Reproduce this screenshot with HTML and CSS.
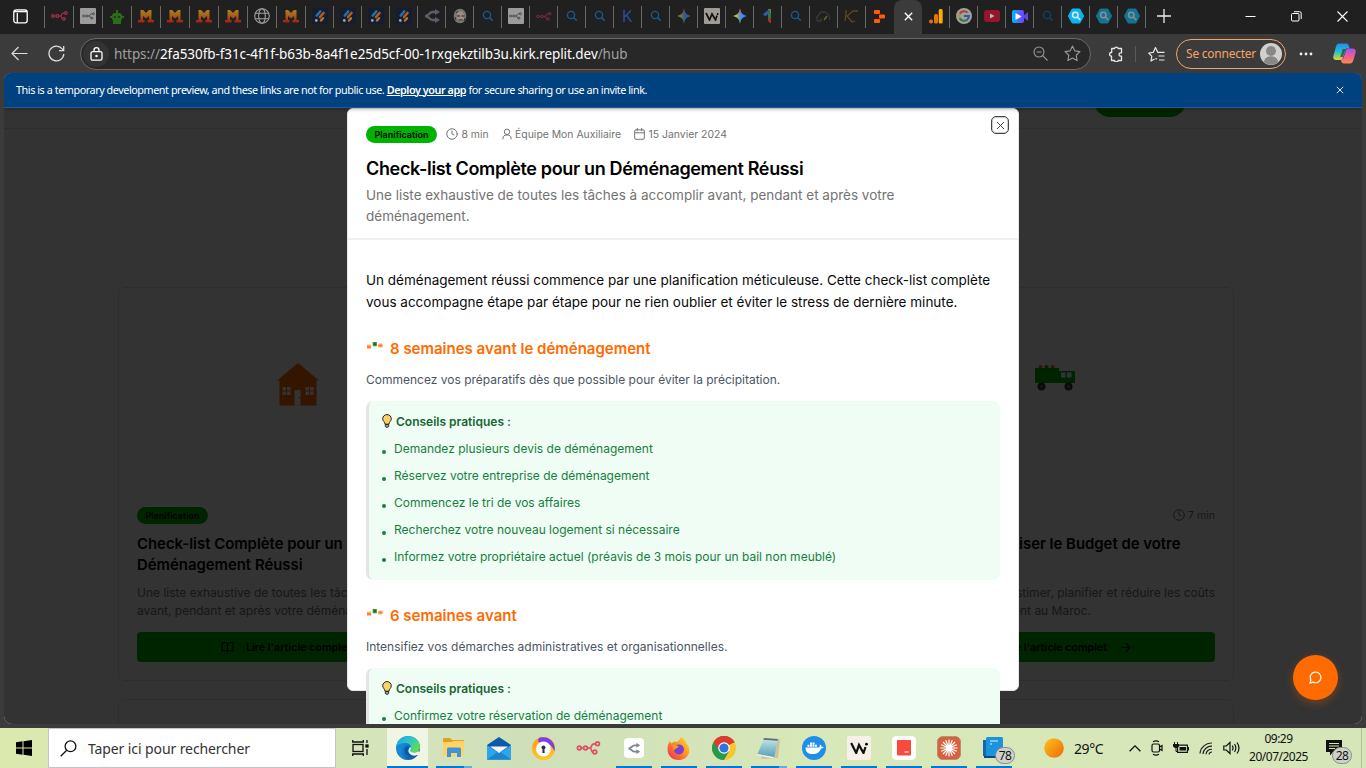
FILE: index.html
```html
<!DOCTYPE html>
<html lang="fr">
<head>
<meta charset="utf-8">
<title>Hub</title>
<link rel="stylesheet" href="styles.css">
</head>
<body>
<svg class="defs" width="0" height="0">
  <defs>
    <linearGradient id="mg" x1="0" y1="0" x2="0" y2="1"><stop offset="0" stop-color="#a8831b"/><stop offset=".5" stop-color="#a85a1b"/><stop offset="1" stop-color="#a01c12"/></linearGradient>
    <linearGradient id="gem" x1="0" y1="0" x2="1" y2="0"><stop offset="0" stop-color="#f5c02c"/><stop offset=".3" stop-color="#b8b84c"/><stop offset=".5" stop-color="#4f90e8"/><stop offset="1" stop-color="#3a7ef0"/></linearGradient>
    <linearGradient id="gemv" x1="0" y1="0" x2="0" y2="1"><stop offset="0" stop-color="#f0403c"/><stop offset=".42" stop-color="#f0403c" stop-opacity="0"/><stop offset=".6" stop-color="#2fae58" stop-opacity="0"/><stop offset="1" stop-color="#2fae58"/></linearGradient>
    <linearGradient id="clip" x1="0" y1="0" x2="1" y2="0"><stop offset="0" stop-color="#00b8ff"/><stop offset="1" stop-color="#7a3cff"/></linearGradient>
    <linearGradient id="cop1" x1="0" y1="0" x2="0" y2="1"><stop offset="0" stop-color="#1f8bf0"/><stop offset=".5" stop-color="#22c3c9"/><stop offset="1" stop-color="#e8d42a"/></linearGradient>
    <linearGradient id="cop2" x1="0" y1="0" x2="0" y2="1"><stop offset="0" stop-color="#a055f0"/><stop offset=".5" stop-color="#ec5a9c"/><stop offset="1" stop-color="#ff8a4a"/></linearGradient>
    <linearGradient id="edge1" x1="0" y1="0" x2="1" y2=".6"><stop offset="0" stop-color="#1b9de2"/><stop offset=".5" stop-color="#2cc3d0"/><stop offset="1" stop-color="#5fdc52"/></linearGradient>
    <linearGradient id="edge2" x1="0" y1="0" x2="1" y2="1"><stop offset="0" stop-color="#1aa0e0"/><stop offset="1" stop-color="#0b4fa0"/></linearGradient>
    <linearGradient id="sun" x1="0" y1="0" x2="1" y2="1"><stop offset="0" stop-color="#ffc21a"/><stop offset="1" stop-color="#ec6a08"/></linearGradient>
    <linearGradient id="fox" x1="1" y1="0" x2="0" y2="1"><stop offset="0" stop-color="#ffe52e"/><stop offset=".5" stop-color="#ff8a22"/><stop offset="1" stop-color="#f0205a"/></linearGradient>
    <linearGradient id="note" x1="0" y1="0" x2="0" y2="1"><stop offset="0" stop-color="#c8e6ea"/><stop offset="1" stop-color="#4f9fb4"/></linearGradient>
    <linearGradient id="avast" x1="0" y1="0" x2="0" y2="1"><stop offset="0" stop-color="#ff9a1a"/><stop offset="1" stop-color="#ffc82a"/></linearGradient>
    <symbol id="n8n" viewBox="0 0 24 14"><g fill="none" stroke="currentColor" stroke-width="1.7"><circle cx="2.8" cy="7" r="1.9"/><circle cx="9" cy="7" r="1.9"/><path d="M4.7 7h2.4M10.9 7H13c3 0 1-4.2 4.5-4.2h1.6M13 7c3 0 1 4 3.500 4"/><circle cx="21" cy="2.800" r="1.900"/><circle cx="18.300" cy="11" r="1.900"/></g></symbol>
    <symbol id="mist" viewBox="0 0 16 14"><path fill="url(#mg)" d="M2.500 1h2.600l2.900 3 2.900-3h2.600v10H16v2.500H9.500V11h1.600V7L8 9.500 5 7v4h1.500v2.500H0V11h2.500z"/></symbol>
    <symbol id="pen" viewBox="0 0 16 16"><rect width="16" height="16" rx="1" fill="#161d33"/><path d="M4.800 7.500 8.200 3.500" stroke="#2372a8" stroke-width="2.600" stroke-linecap="round"/><path d="M8 9 11.500 5" stroke="#b05c24" stroke-width="2.600" stroke-linecap="round"/><path d="M9 12.500l2-2.300" stroke="#b07b24" stroke-width="2.400" stroke-linecap="round"/><circle cx="4.300" cy="12.500" r="1.400" fill="#a0a0a0"/></symbol>
    <symbol id="mag" viewBox="0 0 12 12"><circle cx="5" cy="5" r="3.600" fill="none" stroke="currentColor" stroke-width="1.300"/><path d="M7.600 7.600l3.200 3.200" stroke="currentColor" stroke-width="1.500"/></symbol>
    <symbol id="arr" viewBox="0 0 16 14"><g fill="none" stroke="currentColor" stroke-width="2.400"><path d="M12 3H9C4.500 3 5.500 7 1 7c4.500 0 3.500 4 8 4h3"/></g><path fill="currentColor" d="M11 0l5 3-5 3zM11 8l5 3-5 3z"/></symbol>
    <symbol id="hex" viewBox="0 0 16 16"><path d="M4.200 1h7.600L15.600 8l-3.800 7H4.200L.4 8z" fill="currentColor" stroke="currentColor" stroke-linejoin="round"/><circle cx="7.300" cy="7" r="2.700" fill="none" stroke="#d8eef4" stroke-width="1.500"/><path d="M9.300 9l3 3" stroke="#d8eef4" stroke-width="1.600"/></symbol>
    <symbol id="spark" viewBox="0 0 16 16"><path fill="url(#gem)" d="M8 .5C8.800 5 11 7.200 15.500 8 11 8.800 8.800 11 8 15.500 7.200 11 5 8.800.5 8 5 7.200 7.200 5 8 .5z"/><path fill="url(#gemv)" d="M8 .5C8.800 5 11 7.200 15.500 8 11 8.800 8.800 11 8 15.500 7.200 11 5 8.800.5 8 5 7.200 7.200 5 8 .5z"/></symbol>
    <symbol id="clock" viewBox="0 0 24 24"><g fill="none" stroke="currentColor" stroke-width="2" stroke-linecap="round"><circle cx="12" cy="12" r="10.500"/><path d="M12 6v6l4 2"/></g></symbol>
    <symbol id="garland" viewBox="0 0 16 8"><rect x="0" y="2.500" width="4.200" height="4" rx=".5" fill="#ffb27c"/><rect x="0" y="4.200" width="4" height="2" fill="#ff7a22"/><rect x="5.700" y="0" width="4.200" height="4.200" rx=".5" fill="#2b9a35"/><rect x="7" y="1.400" width="1.600" height="1.500" fill="#46332a"/><rect x="11.300" y="1.500" width="4.200" height="4" rx=".5" fill="#ffb27c"/><rect x="11.400" y="2.700" width="4" height="1.700" fill="#ff7a22"/></symbol>
    <symbol id="bulb" viewBox="0 0 10 14"><path d="M5 .6a4.200 4.200 0 0 0-4.300 4.200C.7 7.200 3 7.800 3 10.200h4c0-2.400 2.300-3 2.300-5.400A4.200 4.200 0 0 0 5 .6z" fill="#fcd265" stroke="#222" stroke-width="1"/><path d="M3.300 10.500h3.400v2L5 13.600 3.300 12.500z" fill="#999" stroke="#222" stroke-width=".9"/></symbol>
  </defs>
</svg>

<div class="tabs">
  <div class="tabs-menu"><svg width="15" height="15" viewBox="0 0 15 15"><rect x=".8" y=".8" width="13.400" height="13" rx="2.300" fill="none" stroke="#fff" stroke-width="1.300"/><path d="M1 2.500h13M4.300 4v10" stroke="#fff" stroke-width="1.300"/></svg></div>
  <div class="tab wide c-n8n"><svg width="17" height="10"><use href="#n8n"/></svg></div>
  <div class="tab wide"><span class="sq"><svg width="13" height="8"><use href="#n8n"/></svg></span></div>
  <div class="tab wide"><svg width="14" height="15" viewBox="0 0 14 15"><path d="M7 1v4" stroke="#2c6a1c" stroke-width="2"/><rect x="2" y="4" width="10" height="8" rx="3" fill="#2c6a1c"/><path d="M0 8h14M4 12h6v2H4z" stroke="#2c6a1c" stroke-width="2"/><circle cx="5" cy="8" r="1" fill="#1b2b18"/><circle cx="9" cy="8" r="1" fill="#1b2b18"/></svg></div>
  <div class="tab wide"><svg width="16" height="14"><use href="#mist"/></svg></div>
  <div class="tab wide"><svg width="16" height="14"><use href="#mist"/></svg></div>
  <div class="tab wide"><svg width="16" height="14"><use href="#mist"/></svg></div>
  <div class="tab wide"><svg width="16" height="14"><use href="#mist"/></svg></div>
  <div class="tab wide"><svg width="16" height="16" viewBox="0 0 16 16" fill="none" stroke="#a0a0a0" stroke-width="1.100"><circle cx="8" cy="8" r="7.300"/><ellipse cx="8" cy="8" rx="3.300" ry="7.300"/><path d="M1.300 5.300h13.400M1.300 10.700h13.400"/></svg></div>
  <div class="tab wide"><svg width="16" height="14"><use href="#mist"/></svg></div>
  <div class="tab"><svg width="16" height="16"><use href="#pen"/></svg></div>
  <div class="tab"><svg width="16" height="16"><use href="#pen"/></svg></div>
  <div class="tab"><svg width="16" height="16"><use href="#pen"/></svg></div>
  <div class="tab"><svg width="16" height="16"><use href="#pen"/></svg></div>
  <div class="tab c-arr"><svg width="16" height="14"><use href="#arr"/></svg></div>
  <div class="tab"><svg width="14" height="16" viewBox="0 0 14 16"><ellipse cx="7" cy="8" rx="6.300" ry="7.300" fill="#777"/><ellipse cx="7.500" cy="8.500" rx="3.800" ry="5" fill="#a08c82"/><path d="M4 8h3M8.500 8h3M5.500 12h4" stroke="#222" fill="none"/><path d="M3 5l2-2M2 9l1 3M11 13l1-3" stroke="#333"/></svg></div>
  <div class="tab c-mag"><svg width="12" height="12"><use href="#mag"/></svg></div>
  <div class="tab"><span class="sq"><svg width="13" height="8"><use href="#n8n"/></svg></span></div>
  <div class="tab c-n8n dim"><svg width="16" height="9"><use href="#n8n"/></svg></div>
  <div class="tab c-mag"><svg width="12" height="12"><use href="#mag"/></svg></div>
  <div class="tab c-mag"><svg width="12" height="12"><use href="#mag"/></svg></div>
  <div class="tab"><svg width="9" height="12" viewBox="0 0 9 12"><path d="M1 0v12M8 .5 1.500 7M3.500 5 8.300 12" stroke="#2b4b9b" stroke-width="1.500" fill="none"/></svg></div>
  <div class="tab c-mag"><svg width="12" height="12"><use href="#mag"/></svg></div>
  <div class="tab half"><svg width="16" height="16"><use href="#spark"/></svg></div>
  <div class="tab"><span class="sq cream"><svg width="14" height="9" viewBox="0 0 14 9"><path d="M1 1l3.500 7L7 2l3.500 6L12 3.500" fill="none" stroke="#111" stroke-width="1.700"/><circle cx="12.700" cy="2" r=".9"/></svg></span></div>
  <div class="tab"><svg width="16" height="16"><use href="#spark"/></svg></div>
  <div class="tab"><svg width="9" height="15" viewBox="0 0 9 15"><path d="M5 0h3v5H5z" fill="#8a7c1d"/><path d="M6.500 0 0 5l2 2.500L7 4z" fill="#2f5aa8"/><path d="M5 4h3v6H5z" fill="#2c7a42"/><path d="M5 9h3v5H7L5 12z" fill="#97382f"/></svg></div>
  <div class="tab c-mag"><svg width="12" height="12"><use href="#mag"/></svg></div>
  <div class="tab"><svg width="15" height="12" viewBox="0 0 15 12" fill="none" stroke="#353c30" stroke-width="1.300"><path d="M1 11V7l4-5h4l4 3 1 5M1 11h4V8"/><path d="M8 10l3-4" stroke="#766b1d"/></svg></div>
  <div class="tab"><svg width="15" height="14" viewBox="0 0 15 14" fill="none" stroke="#5b481c" stroke-width="1.300"><path d="M2 1v3L1 12M14 2H9L3 7l5 6 3-1"/></svg></div>
  <div class="tab last"><svg width="11" height="13" viewBox="0 0 11 13" fill="#ff5a0a"><rect width="6" height="4" rx=".8"/><rect x="5" y="4.500" width="6" height="4" rx=".8"/><rect y="9" width="6" height="4" rx=".8"/></svg></div>
  <div class="tab active"><svg width="9" height="9" viewBox="0 0 9 9"><path d="M.8.8l7.400 7.400M8.200.8.8 8.200" stroke="#fff" stroke-width="1.300"/></svg></div>
  <div class="tab"><svg width="14" height="15" viewBox="0 0 14 15"><rect x="9.700" y="0" width="4" height="14.500" rx="1.500" fill="#f9ab00"/><rect x="5" y="5" width="4" height="9.500" rx="1.500" fill="#e8710a"/><circle cx="2" cy="12.500" r="2" fill="#e8710a"/></svg></div>
  <div class="tab"><svg width="16" height="16" viewBox="0 0 16 16"><circle cx="8" cy="8" r="8" fill="#a0a0a0"/><g fill="none" stroke-width="2"><path d="M11.500 4.600A4.900 4.900 0 0 0 3.700 5.700" stroke="#b0402f"/><path d="M3.700 5.700a4.900 4.900 0 0 0 0 4.600" stroke="#b8912a"/><path d="M3.700 10.300a4.900 4.900 0 0 0 7.400 1.400" stroke="#2c7a42"/><path d="M11.100 11.700A4.900 4.900 0 0 0 12.900 8H8" stroke="#33599e"/></g></svg></div>
  <div class="tab"><svg width="16" height="12" viewBox="0 0 16 12"><rect width="16" height="12" rx="3" fill="#96152d"/><path d="M6 3.500v5L10.500 6z" fill="#bbb"/></svg></div>
  <div class="tab"><svg width="16" height="13" viewBox="0 0 16 13"><rect width="12" height="13" rx="2" fill="url(#clip)"/><path d="M11 6l5-4v9l-5-4z" fill="#6048d8"/><path d="M3.500 3v7l6-3.500z" fill="#fff"/></svg></div>
  <div class="tab c-mag dark"><svg width="12" height="12"><use href="#mag"/></svg></div>
  <div class="tab c-hex"><svg width="16" height="16"><use href="#hex"/></svg></div>
  <div class="tab c-hex half"><svg width="16" height="16"><use href="#hex"/></svg></div>
  <div class="tab c-hex half"><svg width="16" height="16"><use href="#hex"/></svg></div>
  <div class="newtab"><svg width="14" height="14" viewBox="0 0 14 14"><path d="M7 0v14M0 7h14" stroke="#eee" stroke-width="1.300"/></svg></div>
  <div class="winbtns">
    <svg width="11" height="11" viewBox="0 0 11 11"><path d="M.5 5.500h10" stroke="#fff"/></svg>
    <svg width="11" height="11" viewBox="0 0 11 11" fill="none" stroke="#fff"><rect x=".5" y="2.500" width="7.500" height="7.500" rx="1"/><path d="M3 .7h5.500A1.600 1.600 0 0 1 10.200 2.300V8"/></svg>
    <svg width="11" height="11" viewBox="0 0 11 11"><path d="M.5.5l10 10M10.500.5l-10 10" stroke="#fff" stroke-width="1.100"/></svg>
  </div>
</div>

<div class="toolbar">
  <svg class="back" width="17" height="15" viewBox="0 0 17 15" fill="none" stroke="#ddd" stroke-width="1.200"><path d="M16.500 7.500H1M7.500 1 1 7.500 7.500 14"/></svg>
  <svg class="reload" width="17" height="17" viewBox="0 0 17 17" fill="none" stroke="#ddd" stroke-width="1.300"><path d="M15.800 9a7.400 7.400 0 1 1-1.600-5.100L15.500 5.500M15.700 1v4.700H11"/></svg>
  <div class="urlbar">
    <span class="lock"><svg width="13" height="14" viewBox="0 0 13 14" fill="none" stroke="#fff" stroke-width="1.300"><rect x="1" y="4.700" width="11" height="8.500" rx="1.600"/><path d="M4 4.700V3.200a2.500 2.500 0 0 1 5 0v1.500"/><circle cx="6.500" cy="9" r=".6" fill="#fff"/></svg></span>
    <span class="url"><i>https://</i>2fa530fb-f31c-4f1f-b63b-8a4f1e25d5cf-00-1rxgekztilb3u.kirk.replit.dev<i>/hub</i></span>
    <svg class="zoomout" width="15" height="15" viewBox="0 0 15 15" fill="none" stroke="#999" stroke-width="1.100"><circle cx="6" cy="6" r="5"/><path d="M9.700 9.700l4.800 4.800M3.500 6h5"/></svg>
    <svg width="17" height="17" viewBox="0 0 24 24" fill="none" stroke="#999" stroke-width="1.600" stroke-linejoin="round"><path d="M12 1.500l3.200 6.800 7.300 1-5.300 5.200 1.300 7.500L12 18.400 5.500 22l1.300-7.500L1.500 9.300l7.300-1z"/></svg>
  </div>
  <svg class="puzzle" width="15" height="16" viewBox="0 0 15 16" fill="none" stroke="#e8e8e8" stroke-width="1.300" stroke-linejoin="round"><path d="M4 2.500h2.500a1.900 1.900 0 0 1 3.700 0h3.300v4.300h-.8a1.700 1.700 0 0 0 0 3.400h.8v4.300h-3.300a1.900 1.900 0 0 1-3.700 0H3.500v-4.300H3a1.900 1.900 0 0 1 0-3.700h.7V2.500z"/></svg>
  <span class="vsep"></span>
  <svg class="favs" width="17" height="16" viewBox="0 0 17 16" fill="none" stroke="#e8e8e8" stroke-width="1.200" stroke-linejoin="round"><path d="M6.500 13 3 15l.8-4.700L.8 7l4.500-.7L7.500 1.500 9.700 6.300H16.500M10.500 10H16.500M11 14h5.500M7.500 12.400l1.500.8"/></svg>
  <span class="signin">Se connecter<span class="avatar"><svg width="22" height="22" viewBox="0 0 22 22"><circle cx="11" cy="11" r="11" fill="#d2d0ce"/><circle cx="11" cy="8" r="5" fill="#8a8886"/><path d="M4 19.300c0-8 14-8 14 0a11 11 0 0 1-14 0z" fill="#8a8886"/></svg></span></span>
  <svg class="more" width="14" height="4" viewBox="0 0 14 4" fill="#eee"><circle cx="2" cy="2" r="1.400"/><circle cx="7" cy="2" r="1.400"/><circle cx="12" cy="2" r="1.400"/></svg>
  <svg class="copilot" width="23" height="21" viewBox="0 0 23 21"><path d="M6 .5h7c2 0 2.500 1 3 3l.6 2H13l-3 9c-.6 2-1.500 2.500-3 2.500H3C.5 17-.3 15.300.5 12.500L3 3.500C3.600 1.500 4.400.5 6 .5z" fill="url(#cop1)"/><path d="M17 5.500h2.500c2.800 0 3.700 1.700 3 4.500l-2.200 7.500c-.6 2-1.600 3-3.300 3H11c-2 0-2.500-1-3-3L7.500 16H10l3-8.500c.6-1.500 1.500-2 4-2z" fill="url(#cop2)"/><path d="M9.800 6h2.700L9.800 14H7.200z" fill="#3b3b3b" opacity=".75"/></svg>
</div>

<div class="frame">
<div class="viewport">
  <main class="page">
    <header class="site"><svg width="20" height="12" viewBox="0 0 20 12"><circle cx="5" cy="6" r="4" fill="#ff6b00"/><circle cx="15" cy="6" r="4" fill="#ff6b00"/></svg><span class="cta"></span></header>
    <section class="grid">
      <article class="card">
        <div class="art"><svg class="house" width="42" height="43" viewBox="0 0 42 43"><path fill="#ff6b00" d="M21 0l21 17.500h-2.500V42.500h-37V17.500H0z"/><g fill="#fff"><rect x="17.500" y="27" width="6" height="15.500"/><path d="M5.500 24h8v8h-8zM28.500 24h8v8h-8z"/></g><path d="M5.500 28h8M9.500 24v8M28.500 28h8M32.500 24v8" stroke="#ff6b00"/><circle cx="22" cy="34.500" r=".8" fill="#ff6b00"/></svg></div>
        <div class="row"><span class="badge">Planification</span></div>
        <h3>Check-list Complète pour un Déménagement Réussi</h3>
        <p>Une liste exhaustive de toutes les tâches à accomplir avant, pendant et après votre déménagement.</p>
        <div class="btn"><svg width="13" height="13" viewBox="0 0 24 24" fill="none" stroke="#000" stroke-width="2"><path d="M12 6v15M12 6c-1-2-3-3-5-3H2v15h7c2 0 3 1 3 3 0-2 1-3 3-3h7V3h-5c-2 0-4 1-5 3z"/></svg><span>Lire l'article complet</span><svg class="go" width="11" height="11" viewBox="0 0 11 11" fill="none" stroke="#000" stroke-width="1.200"><path d="M1 5.500h9M5.800 1.200 10 5.500 5.800 9.800"/></svg></div>
      </article>
      <article class="card"></article>
      <article class="card">
        <div class="art"><svg class="truck" width="40" height="27" viewBox="0 0 40 27"><g fill="#ff6b00"><circle cx="5.500" cy="2" r="2"/><circle cx="17.500" cy="2" r="2"/></g><circle cx="11.500" cy="2" r="2" fill="#00b300"/><path fill="#00b300" d="M1 3h23v3h15q1 0 1 1v11H0V4q0-1 1-1z"/><path d="M26 7.500h4.500v5H26zM32 7.500h4.500v5H32z" fill="#fff"/><g fill="#333"><circle cx="6.500" cy="21.500" r="4"/><circle cx="33.500" cy="21.500" r="4"/></g><circle cx="6.500" cy="21.500" r="1.800" fill="#666"/><circle cx="33.500" cy="21.500" r="1.800" fill="#666"/></svg></div>
        <div class="row end"><svg width="12" height="12"><use href="#clock"/></svg><span class="time">7 min</span></div>
        <h3><span class="t3">Comment Optimiser le Budget de votre</span><br>Déménagement</h3>
        <p class="p3"><span>Nos conseils pour estimer, planifier et réduire les coûts</span><span class="l2">d'un déménagement au Maroc.</span></p>
        <div class="btn"><svg width="13" height="13" viewBox="0 0 24 24" fill="none" stroke="#000" stroke-width="2"><path d="M12 6v15M2 3v15h20V3z"/></svg><span>Lire l'article complet</span><svg class="go" width="11" height="11" viewBox="0 0 11 11" fill="none" stroke="#000" stroke-width="1.200"><path d="M1 5.500h9M5.800 1.200 10 5.500 5.800 9.800"/></svg></div>
      </article>
      <article class="card"></article><article class="card"></article><article class="card"></article>
    </section>
  </main>
  <div class="overlay"></div>

  <div class="modal">
    <span class="close"><svg width="9" height="9" viewBox="0 0 9 9"><path d="M1 1l7 7M8 1 1 8" stroke="#444" stroke-width="1"/></svg></span>
    <div class="mhead">
      <div class="meta">
        <span class="badge">Planification</span>
        <svg class="m1" width="12" height="12"><use href="#clock"/></svg><span class="tx">8 min</span>
        <svg class="m2" width="10" height="12" viewBox="0 0 10 12" fill="none" stroke="currentColor"><circle cx="5" cy="3.800" r="2.700"/><path d="M1 11.300V10c0-2 1.500-3 4-3s4 1 4 3v1.300"/></svg><span class="tx">Équipe Mon Auxiliaire</span>
        <svg class="m3" width="11" height="12" viewBox="0 0 11 12" fill="none" stroke="currentColor"><rect x=".7" y="1.800" width="9.600" height="9.500" rx="1.200"/><path d="M.7 4.800h9.600M3.300 0v3M7.700 0v3"/></svg><span class="tx">15 Janvier 2024</span>
      </div>
      <h2>Check-list Complète pour un Déménagement Réussi</h2>
      <p class="desc">Une liste exhaustive de toutes les tâches à accomplir avant, pendant et après votre<br>déménagement.</p>
    </div>
    <div class="mbody">
      <p class="lead">Un déménagement réussi commence par une planification méticuleuse. Cette check-list complète<br>vous accompagne étape par étape pour ne rien oublier et éviter le stress de dernière minute.</p>
      <section class="step">
        <h3><svg width="16" height="8"><use href="#garland"/></svg><span>8 semaines avant le déménagement</span></h3>
        <p>Commencez vos préparatifs dès que possible pour éviter la précipitation.</p>
        <div class="tips">
          <h4><svg width="10" height="14"><use href="#bulb"/></svg>Conseils pratiques :</h4>
          <ul><li>Demandez plusieurs devis de déménagement</li><li>Réservez votre entreprise de déménagement</li><li>Commencez le tri de vos affaires</li><li>Recherchez votre nouveau logement si nécessaire</li><li>Informez votre propriétaire actuel (préavis de 3 mois pour un bail non meublé)</li></ul>
        </div>
      </section>
      <section class="step">
        <h3><svg width="16" height="8"><use href="#garland"/></svg><span>6 semaines avant</span></h3>
        <p>Intensifiez vos démarches administratives et organisationnelles.</p>
        <div class="tips">
          <h4><svg width="10" height="14"><use href="#bulb"/></svg>Conseils pratiques :</h4>
          <ul><li>Confirmez votre réservation de déménagement</li></ul>
        </div>
      </section>
    </div>
  </div>

  <div class="banner"><span>This is a temporary development preview, and these links are not for public use. <b>Deploy your app</b> for secure sharing or use an invite link.</span><svg width="8" height="8" viewBox="0 0 8 8"><path d="M.8.8l6.400 6.400M7.200.8.8 7.200" stroke="#dde6f2"/></svg></div>
  <div class="fab"><svg width="13" height="13" viewBox="0 0 24 24" fill="none" stroke="#fff" stroke-width="2.200" stroke-linejoin="round"><path d="M7.500 20.500A9.800 9.800 0 1 0 3.500 16.500L1.500 22.500z"/></svg></div>
</div>
</div>

<div class="taskbar">
  <div class="start"><svg width="16" height="16" viewBox="0 0 16 16"><path d="M0 2.300 6.500 1.300V7.500H0zM7.500 1.200 16 0v7.500H7.500zM0 8.500h6.500v6.200L0 13.700zM7.500 8.500H16V16l-8.500-1.200z"/></svg></div>
  <div class="search"><svg width="17" height="17" viewBox="0 0 17 17" fill="none" stroke="#111" stroke-width="1.300"><circle cx="10.500" cy="6.300" r="5.400"/><path d="M6.700 10.200.7 16.300"/></svg><span>Taper ici pour rechercher</span></div>
  <div class="app tv"><svg width="17" height="16" viewBox="0 0 17 16" fill="none" stroke="#111" stroke-width="1.300"><rect x="1" y="4.500" width="10" height="7"/><path d="M.7 0v2h10.600V0M.7 16v-2h10.600v2M15 0v3M15 9v6"/><rect x="14" y="5" width="2" height="2" fill="#111"/></svg></div>
  <div class="app edge"><svg width="24" height="24" viewBox="0 0 24 24"><circle cx="12" cy="12" r="12" fill="url(#edge2)"/><path d="M.3 10.500C1.500 4 6.500 0 12 0c7 0 12 5 12 10.500 0 4-3 6-6 6-2.500 0-3.800-1-3.800-2 0-.8 1-1.300 1-3C15.200 9 12.500 7 9 7 5 7 1.500 8.500.3 10.500z" fill="url(#edge1)"/><path d="M9.500 11c-1 1-1.300 2.500-1 4 .6 3.500 4 6 7.500 6 2.500 0 4.500-1 6.300-2.500-1.500.5-7 1-9.300-2-1-1.500-1-3 .5-5 -1-1.500-3-1.500-4-.5z" fill="#0b57a8"/><path d="M14.200 14.500c0 1 1.300 2 3.800 2 1.600 0 3.100-.5 4.200-1.500l1.800 2-1.700 1.800c-3.500 1.700-8.300.7-9.500-2.300-.7-1.700-.3-3.500.9-5 .8-.9 1.500.2 1.500 0 0 1.700-1 2.200-1 3z" fill="#eff4ec"/><path d="M7.500 9C4 12 4.500 20.500 12 24 7 23.500 2.500 20.500 1 15c-.5-4 3-6 6.500-6z" fill="#1787d8"/></svg></div>
  <div class="app on two"><svg width="24" height="20" viewBox="0 0 24 20"><path d="M1 1q0-1 1-1h6l2 2h11q1 0 1 1v4H1z" fill="#e0a020"/><path d="M1 4h9l1-1h10q1 0 1 1v14H1z" fill="#ffd464"/><path d="M5 18v-7q0-1.500 1.500-1.500h11Q19 9.500 19 11v8h-4v-4H9v4H5z" fill="#3f93dc"/></svg></div>
  <div class="app"><svg width="24" height="23" viewBox="0 0 24 23"><path d="M12 0l12 8v14.500H0V8z" fill="#0d5aa8"/><path d="M0 8l12 8.500L24 8v14.500H0z" fill="#2ea7e8"/><path d="M0 22.500 12 14l12 8.500z" fill="#1887d0"/><path d="M3 9.500h18l-9 6.500z" fill="#f4f4f4"/></svg></div>
  <div class="app"><svg width="23" height="23" viewBox="0 0 23 23"><circle cx="11.500" cy="11.500" r="11.500" fill="url(#avast)"/><path d="M8 .6A11.500 11.500 0 0 1 22.500 14C20 8 15 4.500 8 6 5 4 6 2 8 .6z" fill="#7a3fe8"/><circle cx="11.500" cy="12" r="7.500" fill="#fff"/><circle cx="11.500" cy="10.500" r="2" fill="#26324a"/><path d="M10.700 11h1.600l.4 5h-2.400z" fill="#26324a"/></svg></div>
  <div class="app c-pink"><svg width="25" height="14"><use href="#n8n"/></svg></div>
  <div class="app on"><span class="tile"><svg width="14" height="11"><use href="#arr"/></svg></span></div>
  <div class="app on"><svg width="23" height="23" viewBox="0 0 23 23"><path d="M14 0c3 2 4.500 3.500 5 6 2.500 1.500 4 6.500 3 10-1.500 4.500-5.500 7-10.500 7C5 23 .5 18.500.5 12c0-3 .8-5.500 2.500-8 .3 1.300.7 2 1.500 2.500C6 5 8 4.500 9.500 5 11 4 13 3 14 0z" fill="url(#fox)"/><circle cx="12" cy="12.500" r="5" fill="#7a3fd8"/><path d="M5 8c3-1 5 .5 7 1.500-1.500 2-4 1.500-4.500 3.500C5.500 12 5 10 5 8z" fill="#ff9a2a"/></svg></div>
  <div class="app on"><svg width="24" height="24" viewBox="0 0 24 24"><circle cx="12" cy="12" r="12" fill="#f7c52c"/><path d="M12 12 1.600 6A12 12 0 0 1 22.400 6z" fill="#dc3b2e"/><path d="M1.600 6A12 12 0 0 0 12 24l5.200-9-5.200 2.500z" fill="#249a4c"/><path d="M12 6.500h10.700L22.400 6A12 12 0 0 0 1.600 6l5.200 8z" fill="#dc3b2e"/><circle cx="12" cy="12" r="5.800" fill="#fff"/><circle cx="12" cy="12" r="4.600" fill="#2b74e8"/></svg></div>
  <div class="app on two"><svg width="24" height="23" viewBox="0 0 24 23"><path d="M8 1.500 23 2.500 21 21 4 22z" fill="#cfc39a"/><path d="M7 1l14 1-4 19L.5 17z" fill="url(#note)"/><path d="M7 1l14 1-.4 1.800L6.300 2.700z" fill="#5d6e74"/><path d="M.5 17 17 20l-.5 1.500L1 18.500z" fill="#e8eef0"/></svg></div>
  <div class="app on"><svg width="24" height="24" viewBox="0 0 24 24"><circle cx="12" cy="12" r="12" fill="#1d8feb"/><path d="M3.500 11.500h14c.2-1.500 0-2.200.8-3 .8.600 1.200 1.300 1.200 2.300.8-.2 1.700 0 2.200.3-.6 1.300-1.700 1.500-2.700 1.500-1.500 4-4 5.500-8 5.500-5 0-7.500-2-7.500-6.600zM5.500 8.800h2v2h-2zM8 8.800h2v2H8zM10.500 8.800h2v2h-2zM13 8.800h2v2h-2zM8 6.400h2v2H8zM10.500 6.400h2v2h-2z" fill="#fff"/></svg></div>
  <div class="app on"><span class="tile w"><svg width="18" height="12" viewBox="0 0 18 12"><path d="M1.200 1l5 10L9 3l4.500 8L15.500 5" fill="none" stroke="#111" stroke-width="2.200"/><circle cx="16.500" cy="2.200" r="1.400"/></svg></span></div>
  <div class="app on"><svg width="24" height="24" viewBox="0 0 24 24"><rect width="24" height="24" rx="4.500" fill="#fff"/><rect x="5" y="4" width="14" height="15.500" rx="1" fill="#fb4a3c"/><path d="M12.500 16h4" stroke="#fff" stroke-width="1.200"/></svg></div>
  <div class="app on"><svg width="24" height="24" viewBox="0 0 24 24"><rect x=".4" y=".4" width="23.200" height="23.200" rx="5.500" fill="#d9603f" stroke="#a98a78" stroke-width=".8"/><path d="M12 3.500v17M3.500 12h17M6 6l12 12M18 6 6 18M8.700 4.200l6.600 15.600M15.300 4.200 8.700 19.800M4.200 8.700l15.600 6.600M4.200 15.300l15.600-6.600" stroke="#fff" stroke-width="1.200"/></svg></div>
  <div class="app on"><svg width="24" height="24" viewBox="0 0 24 24"><path d="M1 4h12v16H1z" fill="#1468a8"/><rect x="4" y="1" width="17" height="19" rx="1.500" fill="#1b93e0"/><path d="M8 5h8M8 8h2" stroke="#9bd8ff" stroke-width="1.500"/><path d="M2 20h14v2H2z" fill="#0b4a80"/></svg><span class="count">78</span></div>
  <div class="weather"><svg width="20" height="20" viewBox="0 0 20 20"><circle cx="10" cy="10" r="9.800" fill="url(#sun)"/></svg><span>29°C</span></div>
  <div class="tray">
    <svg width="12" height="7" viewBox="0 0 12 7" fill="none" stroke="#111" stroke-width="1.300"><path d="M.6 6.300 6 .9l5.400 5.400"/></svg>
    <svg width="12" height="16" viewBox="0 0 12 16" fill="none" stroke="#111" stroke-width="1.200"><rect x="1" y="4" width="7.500" height="8" rx="1.500"/><path d="M8.500 7 11 5.500v5L8.500 9M2 1.700Q5 0 8 1.700M2 14.300Q5 16 8 14.300"/></svg>
    <svg width="16" height="12" viewBox="0 0 16 12"><path d="M4.600 3.100h9.800v7.300H4.600z" fill="none" stroke="#111" stroke-width="1.100"/><path d="M6.500 5h6.500v3.600H6.500zM15 5h1v3.500h-1zM1 0h1v2H1zM4 0h1v2H4z" fill="#111"/><path d="M0 2h6v2.500q-3 3-6 0z" fill="#111"/><path d="M3 5.500v4h2" stroke="#111" fill="none"/></svg>
    <svg width="14" height="13" viewBox="0 0 14 13" fill="none" stroke="#222" stroke-width="1.200"><path d="M1 11.500A11.500 11.500 0 0 1 13 1M4 12A8.500 8.500 0 0 1 13 4.200M7 12.300a5.500 5.500 0 0 1 6-5M10 12.300a3 3 0 0 1 3-2.300"/></svg>
    <svg width="17" height="14" viewBox="0 0 17 14" fill="none" stroke="#111" stroke-width="1.200"><path d="M.8 5h2.500L7 1.500v11L3.300 9H.8zM9.300 4.700q1.500 2.300 0 4.600M11.500 3q2.700 4 0 8M14 1.500q4 5.500 0 11"/></svg>
  </div>
  <div class="clock"><span>09:29</span><span>20/07/2025</span></div>
  <div class="notif"><svg width="16" height="16" viewBox="0 0 16 16"><path d="M0 0h16v12H7l-3 3.500V12H0z" fill="#111"/><path d="M3 3.500h10M3 6h10M3 8.500h6" stroke="#d6e4b8" stroke-width="1.100"/></svg><span class="count">28</span></div>
</div>
</body>
</html>
```
FILE: styles.css
```css
* { box-sizing: border-box; margin: 0; padding: 0; }
body { width: 1366px; height: 768px; overflow: hidden; display: flex; flex-direction: column; background: #3b3b3b; font-family: "Noto Sans", "Open Sans", sans-serif; }
svg { display: block; flex: none; }
.defs { position: absolute; }

/* Tab strip */
.tabs { display: flex; height: 34px; background: #202020; flex: none; }
.tabs-menu { width: 45px; padding: 9px 0 0 13px; border-right: 1px solid #555; border-image: linear-gradient(#0000 7px, #696969 7px, #696969 27px, #0000 27px) 1; }
.tab { width: 28px; display: flex; align-items: center; justify-content: center; padding-bottom: 2px; border-right: 1px solid; border-image: linear-gradient(#0000 7px, #696969 7px, #696969 27px, #0000 27px) 1; }
.tab.wide { width: 29px; }
.tab.last, .tab.active { border-image: none; border-color: transparent; }
.tab.active { background: #3b3b3b; border: 0; border-radius: 8px 8px 0 0; }
.half > * { opacity: .55; }
.sq { width: 16px; height: 16px; border-radius: 1px; background: #9c9c9c; color: #454550; display: flex; align-items: center; justify-content: center; }
.sq.cream { background: #a09c95; }
.c-n8n { color: #a8304c; }
.c-n8n.dim { color: #742b3c; }
.c-arr { color: #5a606a; }
.c-mag { color: #185a8c; }
.c-mag.dark { color: #163f68; }
.c-hex { color: #0fb5f2; }
.newtab { padding: 9px 0 0 11px; flex: 1; }
.winbtns { display: flex; gap: 35px; padding: 11px 18px 0 0; }

/* Toolbar */
.toolbar { height: 39px; flex: none; display: flex; align-items: center; padding: 2px 10px 2px 11px; }
.reload { margin-left: 20px; }
.urlbar { margin-left: 15px; width: 1012px; height: 32px; border: 1px solid #6a6a6a; border-radius: 16px; background: #282828; display: flex; align-items: center; padding: 0 9px 0 2px; }
.lock { width: 26px; height: 26px; border-radius: 13px; background: #333; display: flex; align-items: center; justify-content: center; }
.url { margin-left: 5px; color: #fff; font-size: 13.5px; letter-spacing: -.07px; flex: 1; white-space: nowrap; }
.url i { font-style: normal; color: #a0a0a0; }
.zoomout { margin-right: 16px; }
.puzzle { margin-left: 17px; }
.vsep { width: 1px; height: 16px; background: #5a5a5a; margin-left: 12px; }
.favs { margin-left: 12px; }
.signin { margin-left: 11px; width: 110px; height: 30px; border: 1px solid #f5a469; border-radius: 15px; color: #f5a469; font-size: 12px; display: flex; align-items: center; justify-content: space-between; padding: 0 3px 0 9px; letter-spacing: -.25px; white-space: nowrap; }
.more { margin-left: 13px; }
.copilot { margin-left: 20px; }

/* Web page */
.frame { height: 655px; flex: none; padding: 0 4px 4px; }
.viewport { position: relative; height: 651px; overflow: hidden; border-radius: 8px; background: #fff; font-family: Inter, sans-serif; }
.site { height: 56px; border-bottom: 1px solid #e5e5e5; display: flex; justify-content: space-between; align-items: flex-end; padding: 0 176px 11px 116px; }
.site svg { margin-bottom: 7px; }
.cta { width: 92px; height: 32px; border-radius: 16px; background: #00b300; }
.grid { display: grid; grid-template-columns: repeat(3, 360px); gap: 18px; margin: 158px 0 0 114px; grid-auto-rows: 394px; }
.card { border: 1px solid #e2e2e2; border-radius: 7px; padding: 0 18px; }
.art { height: 217px; display: flex; justify-content: center; padding-top: 75px; }
.truck { margin: 2px 0 0 2px; }
.row { display: flex; align-items: center; height: 20px; color: #737373; }
.row.end { justify-content: flex-end; }
.time { font-size: 10.600px; margin-left: 3px; }
.badge { display: inline-flex; align-items: center; justify-content: center; width: 71px; height: 17px; border-radius: 9px; background: #00b300; color: #000; font-size: 9px; font-weight: 600; flex: none; }
.card h3 { margin-top: 9px; font-size: 14.900px; line-height: 21px; font-weight: 600; height: 42px; white-space: nowrap; }
.card:first-child h3 { white-space: normal; width: 250px; }
.t3 { padding-left: 9px; }
.card p { margin-top: 8px; font-size: 12px; line-height: 18px; color: #737373; height: 36px; }
.btn { margin-top: 12px; height: 30px; border-radius: 4px; background: #00b300; display: flex; align-items: center; justify-content: center; gap: 12px; font-size: 10.700px; font-weight: 600; white-space: nowrap; }
.go { margin-left: 1px; }
.card .p3 { white-space: nowrap; display: flex; flex-direction: column; align-items: flex-end; }
.l2 { margin-right: 124px; }
.overlay { position: absolute; inset: 0; background: rgba(0,0,0,.8); }

/* Banner */
.banner { position: absolute; left: 0; right: 0; top: 0; height: 35px; background: #00417f; border-bottom: 1px solid #1f5a94; box-shadow: 0 1px 4px rgba(0,0,0,.3); display: flex; align-items: center; justify-content: space-between; padding: 0 18px 0 12px; color: #fff; font: 10.800px "Noto Sans", sans-serif; letter-spacing: -.44px; }
.banner span { padding-bottom: 2px; }
.banner b { text-decoration: underline; font-weight: 600; }

/* Dialog */
.modal { position: absolute; left: 343px; top: 35px; width: 672px; height: 583px; background: #fff; border-radius: 6px; border: 1px solid #e5e5e5; }
.close { position: absolute; right: 9px; top: 7px; width: 18px; height: 18px; border: 1.500px solid #444; box-shadow: inset 0 0 0 1px #ccc; border-radius: 5px; display: flex; align-items: center; justify-content: center; }
.mhead { height: 131px; border-bottom: 2px solid #f0f0f0; padding: 16px 18px 0; }
.meta { display: flex; align-items: center; height: 18px; color: #737373; font-size: 10.400px; white-space: nowrap; }
.m1 { margin-left: 9px; }
.tx { margin-left: 3.500px; }
.m2, .m3 { margin-left: 13px; }
.mhead h2 { margin-top: 15px; font-size: 18px; line-height: 22px; font-weight: 600; letter-spacing: -.34px; white-space: nowrap; }
.desc { margin-top: 5px; font-size: 13.500px; line-height: 21px; color: #737373; white-space: nowrap; }
.mbody { padding: 29px 18px 0; }
.lead { font-size: 13.500px; line-height: 22px; color: #0a0a0a; white-space: nowrap; }
.step { height: 267px; padding-top: 24px; }
.step h3 { display: flex; align-items: center; gap: 7px; height: 22px; font-size: 15px; font-weight: 600; color: #ff6b00; padding-left: 1px; }
.step h3 svg { margin-bottom: 5px; }
.step > p { margin-top: 12px; font-size: 12px; line-height: 18px; color: #4b5563; }
.tips { margin-top: 12px; height: 179px; background: #f0fdf4; border-left: 3px solid #e5e5e5; border-radius: 7px; padding: 11px 0 0 13px; }
.tips h4 { display: flex; align-items: center; gap: 4px; height: 18px; font-size: 12px; font-weight: 600; color: #166534; }
.tips ul { list-style: none; margin-top: 5px; font-size: 12px; color: #15803d; }
.tips li { height: 27px; display: flex; align-items: center; white-space: nowrap; }
.tips li::before { content: ""; width: 4px; height: 4px; border-radius: 2px; background: #15803d; margin: 7px 8px 0 0; }
.fab { position: absolute; left: 1289px; top: 582px; width: 45px; height: 45px; border-radius: 50%; background: #ff6b00; display: flex; align-items: center; justify-content: center; box-shadow: 0 3px 10px rgba(255,107,0,.3); }

/* Taskbar */
.taskbar { height: 40px; flex: none; display: flex; background: linear-gradient(90deg, #dbe8ae, #d5e4bb 30%, #cfdfb9 38%, #d9e8b8 60%, #d6e6b9); color: #111; }
.start { width: 48px; padding: 12px 0 0 16px; }
.search { width: 288px; background: #fff; border: 1px solid #c4c4c8; display: flex; align-items: center; padding-left: 11px; font-size: 14px; letter-spacing: -.1px; color: #333; }
.search span { margin-left: 11px; white-space: nowrap; }
.app { width: 45px; display: flex; align-items: center; justify-content: center; position: relative; flex: none; }
.app.tv { width: 49px; }
.app.edge { width: 41px; margin: 0 3px 0 2px; background: #f0f5e4; border-bottom: 2px solid #0078d7; padding-top: 2px; }
.app.on { background: linear-gradient(#0078d7, #0078d7) 50% 100% / 36px 2px no-repeat; }
.app.two { background: linear-gradient(90deg, #0078d7 28px, #6aa9dc 28px) 50% 100% / 36px 2px no-repeat; }
.c-pink { color: #dd4c68; }
.tile { width: 20px; height: 20px; border-radius: 4px; background: #fff; color: #7d8694; display: flex; align-items: center; justify-content: center; }
.tile.w { width: 24px; height: 24px; background: #f7f0e8; border-radius: 2px; }
.count { position: absolute; left: 24px; top: 19px; width: 20px; height: 17px; border-radius: 9px; border: 1px solid #888; background: #cfd2cc; font-size: 12px; line-height: 15px; text-align: center; letter-spacing: -.5px; }
.weather { display: flex; align-items: center; gap: 10px; margin-left: 28px; width: 85px; font-size: 14px; letter-spacing: -.4px; white-space: nowrap; }
.tray { display: flex; align-items: center; justify-content: space-between; width: 111px; }
.clock { width: 77px; display: flex; flex-direction: column; align-items: center; justify-content: center; font-size: 12px; line-height: 18px; letter-spacing: -.5px; padding-bottom: 1px; }
.notif { position: relative; padding: 12px 0 0 9px; width: 45px; border-right: 1px solid #b5c29a; }
.notif .count { left: 15px; }
```
